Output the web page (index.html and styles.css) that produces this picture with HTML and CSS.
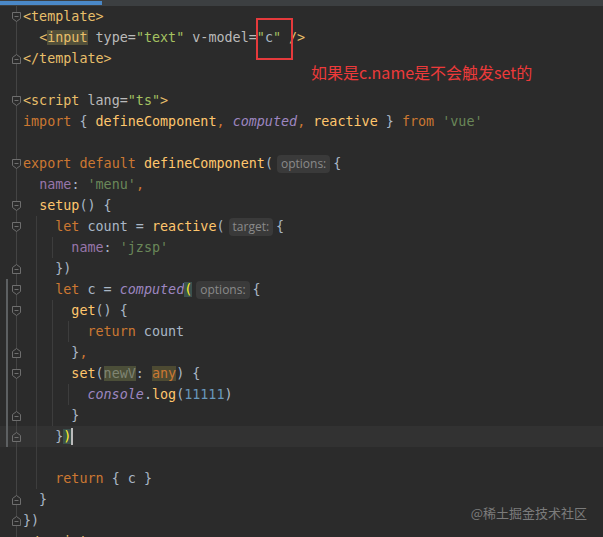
FILE: index.html
```html
<!DOCTYPE html>
<html lang="en">
<head>
    <meta charset="UTF-8">
    <title>menu.vue</title>
    <link rel="stylesheet" href="styles.css">
</head>
<body>
    <svg class="defs" width="0" height="0">
        <symbol id="fold-open" viewBox="0 0 9 12">
            <path d="M0.5 1.5H8.5V7.5L4.5 10.5L0.5 7.5Z"/>
            <path d="M2.5 5.5H6.5"/>
        </symbol>
        <symbol id="fold-close" viewBox="0 0 9 12">
            <path d="M0.5 10.5H8.5V4.5L4.5 1.5L0.5 4.5Z"/>
            <path d="M2.5 6.5H6.5"/>
        </symbol>
    </svg>

    <div class="tabs"><div class="tab-active"></div></div>

    <div class="editor">
        <div class="ln"><div class="gut"><svg class="fold"><use href="#fold-open"/></svg></div><div class="code"><span class="t">&lt;template&gt;</span></div></div>
        <div class="ln"><div class="gut"></div><div class="code">  <span class="t">&lt;<span class="tm">input</span></span> <span class="a">type=</span><span class="v">"text"</span> <span class="a">v-model=</span><span class="v">"</span>c<span class="v">"</span> <span class="t">/&gt;</span></div></div>
        <div class="ln"><div class="gut"><svg class="fold"><use href="#fold-close"/></svg></div><div class="code"><span class="t">&lt;/template&gt;</span></div></div>
        <div class="ln"><div class="gut"></div><div class="code"></div></div>
        <div class="ln"><div class="gut"><svg class="fold"><use href="#fold-open"/></svg></div><div class="code"><span class="t">&lt;script</span> <span class="a">lang=</span><span class="v">"ts"</span><span class="t">&gt;</span></div></div>
        <div class="ln"><div class="gut"></div><div class="code"><span class="k">import</span> { <span class="f">defineComponent</span><span class="k">,</span> <span class="i">computed</span><span class="k">,</span> <span class="f">reactive</span> } <span class="k">from</span> <span class="s">'vue'</span></div></div>
        <div class="ln"><div class="gut"></div><div class="code"></div></div>
        <div class="ln"><div class="gut"><svg class="fold"><use href="#fold-open"/></svg></div><div class="code"><span class="k">export default</span> <span class="f">defineComponent</span>(<span class="hint">options:</span>{</div></div>
        <div class="ln"><div class="gut"></div><div class="code">  <span class="p">name</span>: <span class="s">'menu'</span><span class="k">,</span></div></div>
        <div class="ln"><div class="gut"><svg class="fold"><use href="#fold-open"/></svg></div><div class="code">  <span class="f">setup</span>() {</div></div>
        <div class="ln"><div class="gut"><svg class="fold"><use href="#fold-open"/></svg></div><div class="code"><span class="ind g"></span><span class="ind"></span><span class="k">let</span> count = <span class="f">reactive</span>(<span class="hint">target:</span>{</div></div>
        <div class="ln"><div class="gut"></div><div class="code"><span class="ind g"></span><span class="ind g"></span><span class="ind"></span><span class="p">name</span>: <span class="s">'jzsp'</span></div></div>
        <div class="ln"><div class="gut"><svg class="fold"><use href="#fold-close"/></svg></div><div class="code"><span class="ind g"></span><span class="ind"></span>})</div></div>
        <div class="ln"><div class="gut mod"><svg class="fold"><use href="#fold-open"/></svg></div><div class="code"><span class="ind g"></span><span class="ind"></span><span class="k">let</span> c = <span class="i">computed</span><span class="bm">(</span><span class="hint">options:</span>{</div></div>
        <div class="ln"><div class="gut mod"><svg class="fold"><use href="#fold-open"/></svg></div><div class="code"><span class="ind g"></span><span class="ind g"></span><span class="ind"></span><span class="f">get</span>() {</div></div>
        <div class="ln"><div class="gut mod"></div><div class="code"><span class="ind g"></span><span class="ind g"></span><span class="ind g"></span><span class="ind"></span><span class="k">return</span> count</div></div>
        <div class="ln"><div class="gut mod"><svg class="fold"><use href="#fold-close"/></svg></div><div class="code"><span class="ind g"></span><span class="ind g"></span><span class="ind"></span>}<span class="k">,</span></div></div>
        <div class="ln"><div class="gut mod"><svg class="fold"><use href="#fold-open"/></svg></div><div class="code"><span class="ind g"></span><span class="ind g"></span><span class="ind"></span><span class="f">set</span>(<span class="unused">newV</span>: <span class="k mark">any</span>) {</div></div>
        <div class="ln"><div class="gut mod"></div><div class="code"><span class="ind g"></span><span class="ind g"></span><span class="ind g"></span><span class="ind"></span><span class="i">console</span>.<span class="f">log</span>(<span class="n">11111</span>)</div></div>
        <div class="ln"><div class="gut mod"><svg class="fold"><use href="#fold-close"/></svg></div><div class="code"><span class="ind g"></span><span class="ind g"></span><span class="ind"></span>}</div></div>
        <div class="ln cur"><div class="gut mod"><svg class="fold"><use href="#fold-close"/></svg></div><div class="code"><span class="ind g"></span><span class="ind"></span>}<span class="bm">)</span><span class="caret"></span></div></div>
        <div class="ln"><div class="gut"></div><div class="code"><span class="ind g"></span></div></div>
        <div class="ln"><div class="gut"></div><div class="code"><span class="ind g"></span><span class="ind"></span><span class="k">return</span> { c }</div></div>
        <div class="ln"><div class="gut"><svg class="fold"><use href="#fold-close"/></svg></div><div class="code">  }</div></div>
        <div class="ln"><div class="gut"><svg class="fold"><use href="#fold-close"/></svg></div><div class="code">})</div></div>
        <div class="ln"><div class="gut"></div><div class="code"><span class="t">&lt;/script&gt;</span></div></div>
    </div>

    <!-- annotation drawn over the screenshot -->
    <div class="mark-box"></div>
    <div class="note">如果是c.name是不会触发set的</div>
    <div class="watermark">@稀土掘金技术社区</div>
</body>
</html>
```
FILE: styles.css
```css
body {
    margin: 0;
    background: #2b2b2b;
    overflow: hidden;
    height: 537px;
}

.defs {
    display: block;
    width: 0;
    height: 0;
}

.tabs {
    height: 6px;
    background: #3c3f41;
    padding-top: 1px;
    box-sizing: border-box;
}

.tab-active {
    width: 102px;
    height: 4px;
    background: #4a88c7;
}

.editor {
    font-family: "DejaVu Sans Mono", monospace;
    font-size: 13.4px;
    line-height: 21px;
    color: #a9b7c6;
}

.ln {
    display: flex;
    height: 21px;
}

.ln.cur {
    background: #323232;
}

.gut {
    width: 23px;
    flex: none;
    display: flex;
    align-items: center;
    padding-left: 12px;
    box-sizing: border-box;
    background: linear-gradient(#444, #444) 16px 0 / 1px 100% no-repeat;
}

.gut.mod {
    background:
        linear-gradient(#444, #444) 16px 0 / 1px 100% no-repeat,
        linear-gradient(#5d6062, #5d6062) 6px 0 / 2px 100% no-repeat;
}

.fold {
    width: 9px;
    height: 12px;
    fill: #2b2b2b;
    stroke: #6e6e6e;
    stroke-width: 1;
}

.cur .fold {
    fill: #323232;
}

.code {
    white-space: pre;
}

.ind {
    display: inline-block;
    width: 2ch;
    height: 21px;
    vertical-align: top;
}

.ind.g {
    background: linear-gradient(#3d3d3d, #3d3d3d) calc(100% - 2px) 0 / 1px 100% no-repeat;
}

/* syntax colours */
.k { color: #cc7832; }
.s { color: #6a8759; }
.f { color: #ffc66d; }
.p { color: #9876aa; }
.i { color: #9d86c0; font-style: italic; }
.n { color: #6897bb; }
.t { color: #e8bf6a; }
.a { color: #bababa; }
.v { color: #a5c261; }

.tm {
    background: #52503a;
}

.bm {
    background: #3b514d;
    color: #ffef28;
}

.unused {
    background: #4b4e38;
    color: #7f8473;
}

.mark {
    background: #4d4a32;
}

.caret {
    display: inline-block;
    width: 2px;
    height: 17px;
    background: #bbbbbb;
    vertical-align: -4px;
}

.hint {
    display: inline-block;
    font-family: "Open Sans", sans-serif;
    font-size: 12px;
    line-height: 18px;
    color: #8a8a8a;
    background: #3a3a3a;
    border-radius: 4px;
    padding: 0 4px;
    margin: 0 3px 0 4px;
}

.mark-box {
    position: absolute;
    left: 256px;
    top: 18px;
    width: 33px;
    height: 38px;
    border: 2px solid #e53a3c;
}

.note {
    position: absolute;
    left: 311px;
    top: 60px;
    font-family: "Noto Sans CJK SC", sans-serif;
    font-size: 16px;
    color: #ec3a3a;
}

.watermark {
    position: absolute;
    right: 16px;
    top: 503px;
    font-family: "Noto Sans CJK SC", sans-serif;
    font-size: 13px;
    color: #7b7b7b;
}
```
